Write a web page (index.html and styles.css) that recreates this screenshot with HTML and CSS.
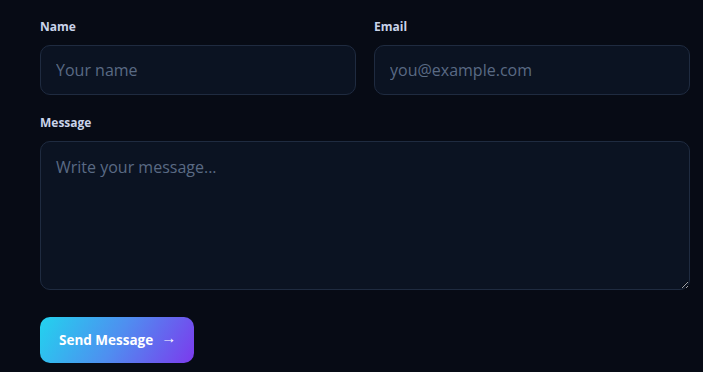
FILE: index.html
```html
<!DOCTYPE html>
<html lang="en">
<head>
<meta charset="utf-8">
<title>Contact</title>
<link rel="stylesheet" href="styles.css">
</head>
<body>
<form class="form">
  <div class="row">
    <div class="field">
      <label class="label" for="name">Name</label>
      <input class="input" id="name" type="text" placeholder="Your name">
    </div>
    <div class="field">
      <label class="label" for="email">Email</label>
      <input class="input" id="email" type="email" placeholder="you@example.com">
    </div>
  </div>
  <div class="field">
    <label class="label" for="msg">Message</label>
    <textarea class="input textarea" id="msg" placeholder="Write your message..."></textarea>
  </div>
  <div class="actions">
    <button class="btn" type="button">Send Message <span class="arrow">→</span></button>
  </div>
</form>
</body>
</html>
```
FILE: styles.css
```css
html, body {
  margin: 0;
  background: #070b15;
}
body {
  font-family: "Segoe UI", "Open Sans", "Noto Sans", sans-serif;
  padding: 19px 13px 0 40px;
}
.form {
  display: flex;
  flex-direction: column;
  gap: 20px;
}
.row {
  display: grid;
  grid-template-columns: 1fr 1fr;
  gap: 18px;
}
.field {
  display: flex;
  flex-direction: column;
}
.label {
  font-size: 12px;
  font-weight: 700;
  line-height: 16px;
  color: #c9d3ea;
  margin-bottom: 10px;
}
.input {
  box-sizing: border-box;
  height: 50px;
  width: 100%;
  background: #0b1322;
  border: 1px solid #1f2b40;
  border-radius: 10px;
  padding: 0 15px;
  font-family: inherit;
  font-size: 16px;
  color: #d6deef;
  outline: none;
}
.input::placeholder {
  color: #5a6a84;
}
.textarea {
  height: 149px;
  padding: 14px 15px;
  resize: vertical;
  display: block;
}
.actions {
  padding-top: 7px;
}
.btn {
  height: 46px;
  padding: 0 18px 0 19px;
  border: none;
  border-radius: 10px;
  background: linear-gradient(120deg, #22d3ee 0%, #4f8ef0 50%, #7c3aed 100%);
  color: #ffffff;
  font-family: inherit;
  font-size: 13.5px;
  font-weight: 700;
  display: inline-flex;
  align-items: center;
  gap: 8px;
  cursor: pointer;
}
.arrow {
  font-weight: 400;
  font-size: 15px;
  line-height: 1;
  position: relative;
  top: -3px;
}
```
